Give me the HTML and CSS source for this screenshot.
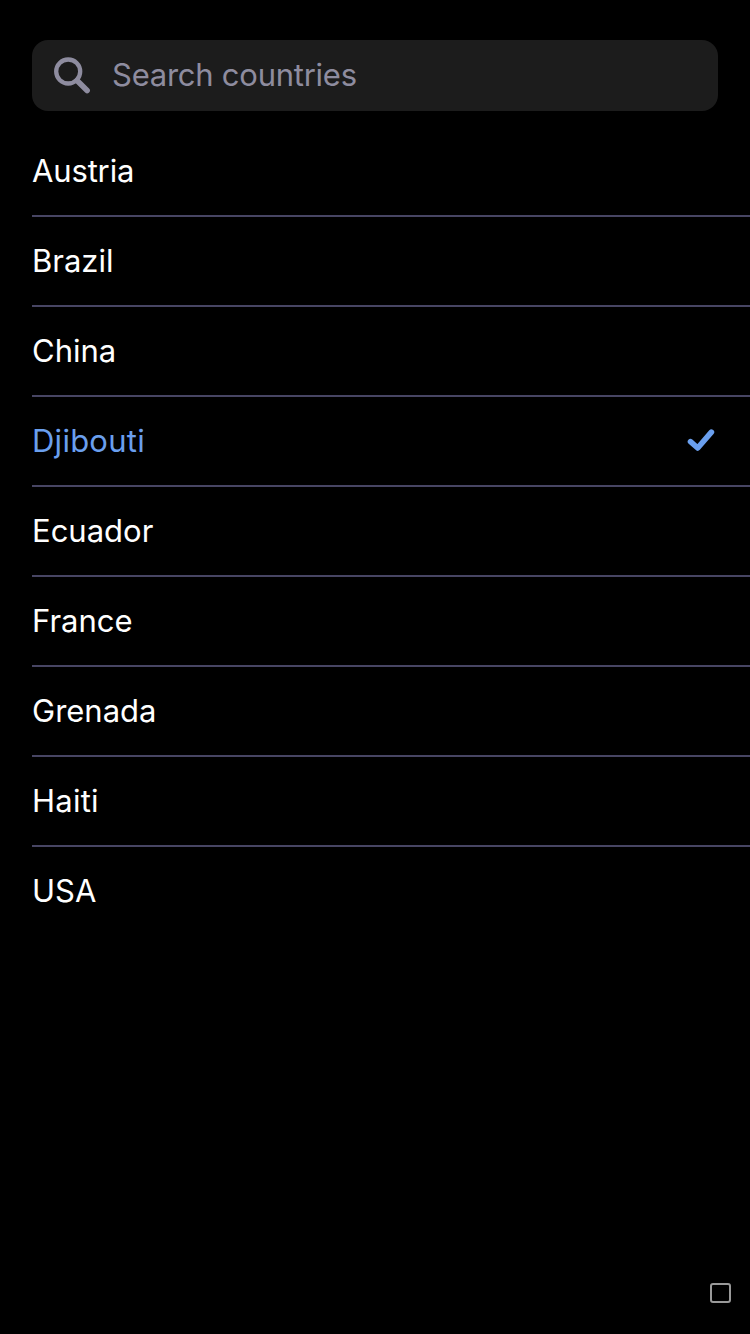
FILE: index.html
```html
<!DOCTYPE html>
<html lang="en">
<head>
<meta charset="utf-8">
<title>Countries</title>
<link rel="stylesheet" href="styles.css">
</head>
<body>
<main class="screen">
  <label class="search">
    <svg class="search-icon" viewBox="0 0 40 40"><circle cx="16.2" cy="15.5" r="12"/><path d="M25 24.5L35.1 34.6" class="handle"/></svg>
    <span class="search-text">Search countries</span>
  </label>
  <ul class="list">
    <li class="row"><span class="tight">Austria</span></li>
    <li class="row"><span>Brazil</span></li>
    <li class="row"><span>China</span></li>
    <li class="row selected"><span class="wide">Djibouti</span><svg class="check" viewBox="0 0 28 24"><path d="M3.5 12.7L10.7 19L24.4 3.1"/></svg></li>
    <li class="row"><span>Ecuador</span></li>
    <li class="row"><span>France</span></li>
    <li class="row"><span>Grenada</span></li>
    <li class="row"><span class="wide">Haiti</span></li>
    <li class="row"><span>USA</span></li>
  </ul>
  <div class="box"></div>
</main>
</body>
</html>
```
FILE: styles.css
```css
* { box-sizing: border-box; }
body { margin: 0; background: #000; color: #fff; font-family: Inter, "Liberation Sans", sans-serif; font-size: 31px; }
.screen { width: 750px; height: 1334px; padding-top: 40px; display: flex; flex-direction: column; overflow: hidden; }
.search { flex: none; height: 71px; margin: 0 32px; padding-left: 20px; border-radius: 16px; background: #1c1c1c; display: flex; align-items: center; gap: 20px; color: #8e8c9f; }
.search-icon { width: 40px; height: 40px; fill: none; stroke: #8e8c9f; stroke-width: 4.3; }
.search-text { padding-bottom: 2px; letter-spacing: -0.25px; }
.handle { stroke-width: 5.6; stroke-linecap: round; }
.list { list-style: none; margin: 16px 0 0 32px; padding: 0; }
.row { height: 90px; display: flex; align-items: center; justify-content: space-between; border-bottom: 2px solid #474563; }
.row span { padding-bottom: 2px; }
.row:last-child { border-bottom-color: transparent; }
.tight { letter-spacing: -0.15px; }
.wide { letter-spacing: 0.25px; }
.selected { color: #6a9fee; }
.check { width: 28px; height: 24px; margin-right: 35px; fill: none; stroke: #6a9fee; stroke-width: 5.6; stroke-linecap: round; stroke-linejoin: round; }
.box { width: 21px; height: 20px; margin: auto 19px 31px auto; border: 2px solid #999; border-radius: 3px; }
```
